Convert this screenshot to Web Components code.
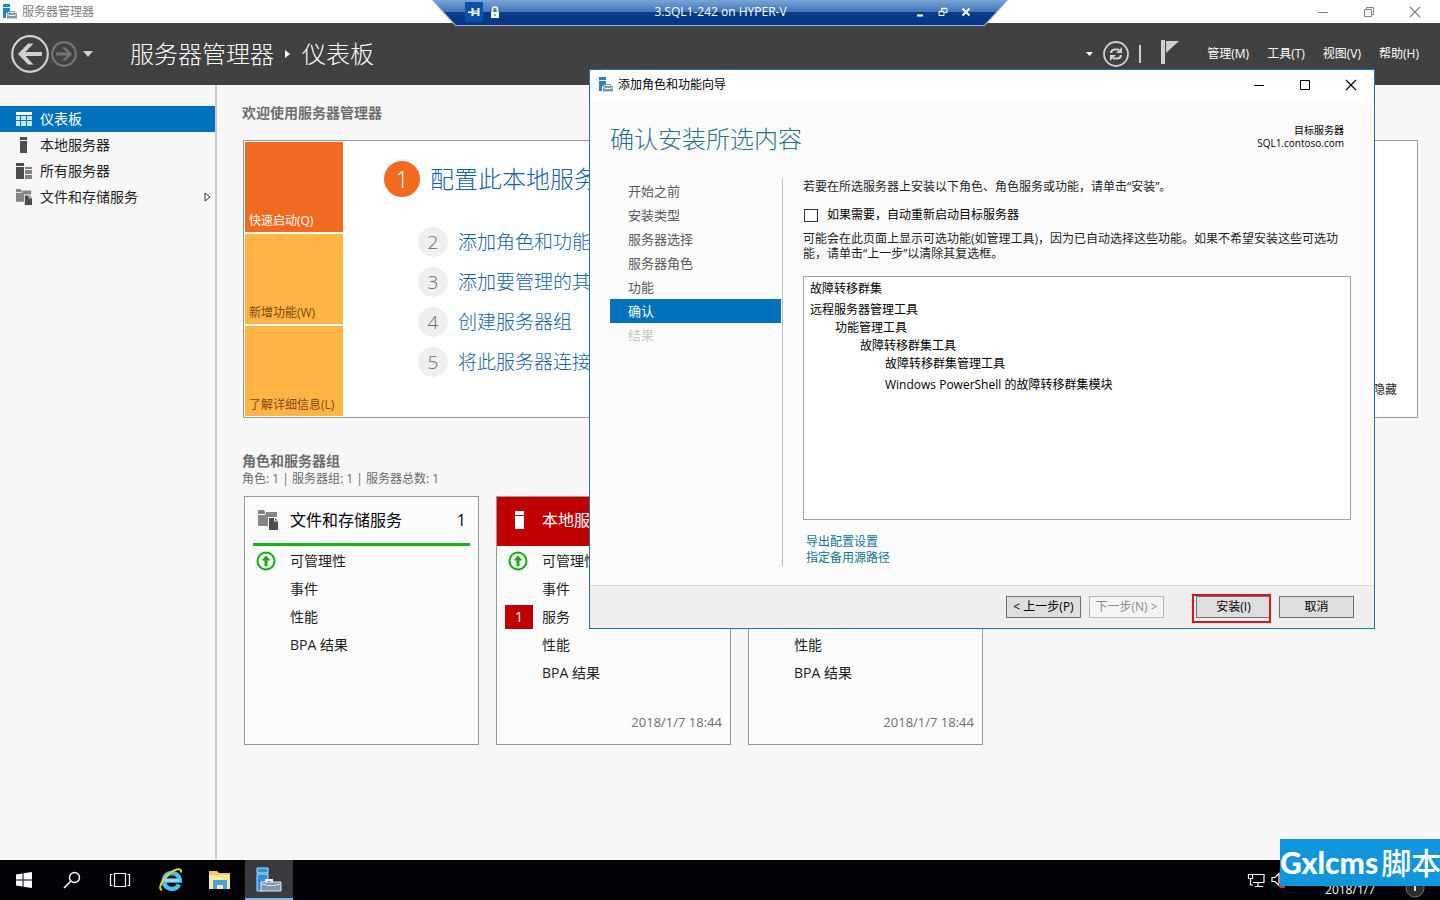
<!DOCTYPE html>
<html lang="zh-CN">
<head>
<meta charset="utf-8">
<title>服务器管理器</title>
<style>
  html, body { margin: 0; }
  body {
    font: 12px/16px "Open Sans", "Noto Sans CJK SC", sans-serif;
    color: #1e1e1e;
    background: #f7f7f7;
  }
</style>
</head>
<body>
<server-desktop></server-desktop>
<script>
const RESET = `
  *, *::before, *::after { box-sizing: border-box; }
  :host { display: block; }
  :host([hidden]) { display: none; }
  button { font: inherit; color: inherit; background: none; border: 0; margin: 0; padding: 0; cursor: default; }
  a { color: inherit; text-decoration: none; }
  ul, ol { list-style: none; margin: 0; padding: 0; }
  h1, h2, h3, p { margin: 0; font-weight: inherit; font-size: inherit; }
`;

function define(name, css, html) {
  customElements.define(name, class extends HTMLElement {
    constructor() {
      super();
      const root = this.attachShadow({ mode: 'open' });
      const tpl = document.createElement('template');
      tpl.innerHTML = `<style>${RESET}${css}</style>${typeof html === 'function' ? html(this) : html}`;
      root.append(tpl.content.cloneNode(true));
    }
  });
}

/* name: [width, height, svg body] */
const ICONS = {
  manager: [16, 16, '<path d="M1 0h7v3H1zM1 4h7v3L5 9v5H1z" fill="#1f86cc"/><path d="M4 9h12v6H4z" fill="#fff"/><path d="M5 9h10v5.500H5z" fill="#7d97ab"/><path d="M7.500 9V7.500h5V9" fill="none" stroke="#7d97ab"/><path d="M5.500 10.500l2 1h5l2-1" fill="none" stroke="#fff"/>'],
  managerBig: [26, 26, '<path d="M1 1h11v5H1zM1 7h11v7l-6 4v6H1z" fill="#2a92e0" stroke="#bfe0f8"/><path d="M10 15v-2h6v2" fill="none" stroke="#fff" stroke-width="2"/><path d="M5 15h20v9H5z" fill="#8296ab" stroke="#e3ebf3"/><path d="M6 17.500h3l2 1h8l2-1h3" fill="none" stroke="#dbe5ee"/>'],
  minimize: [12, 12, '<path d="M1 6.500h10" stroke="currentColor"/>'],
  maximize: [12, 12, '<path d="M1.500 1.500h9v9h-9z" fill="none" stroke="currentColor"/>'],
  restore: [12, 12, '<path d="M1.500 3.500h7v7h-7zM3.500 3V1.500h7v7H9" fill="none" stroke="currentColor"/>'],
  close: [12, 12, '<path d="M1 1l10 10M11 1L1 11" stroke="currentColor" stroke-width="1.100"/>'],
  rdpPin: [14, 12, '<path d="M1 5.500h4v1.500H1zM4.500 2h2v8h-2zM6 4.500h5v3.500H6zM10.500 2h2v8h-2z" fill="#fff"/><path d="M6.500 5.500h4v1h-4z" fill="#1a4c9c"/>'],
  rdpLock: [10, 13, '<path d="M2.500 6V3.500a2.500 2.500 0 015 0V6" fill="none" stroke="#fff" stroke-width="1.600"/><path d="M1 6h8v6H1z" fill="#fff"/><path d="M4.500 8h1v2h-1z" fill="#12408c"/>'],
  rdpMin: [10, 10, '<path d="M2 8.500h6" stroke="#fff" stroke-width="2"/>'],
  rdpRestore: [10, 10, '<path d="M1 4.500h5v4H1zM3.500 4V1.500H9v4H6.500" fill="none" stroke="#fff"/><path d="M1 4.500h5M3.500 1.500H9" stroke="#fff" stroke-width="1.600"/>'],
  rdpClose: [10, 10, '<path d="M1.500 1.500l7 7M8.500 1.500l-7 7" stroke="#fff" stroke-width="2"/>'],
  back: [38, 38, '<circle cx="19" cy="19" r="17.800" fill="none" stroke="#cfcfcf" stroke-width="2.200"/><path d="M7 19L17 8.500h5.500L14.500 17H31v4H14.500l8 8.500H17z" fill="#cfcfcf"/>'],
  forward: [26, 26, '<circle cx="13" cy="13" r="11.800" fill="none" stroke="#757575" stroke-width="2.200"/><path d="M21 13l-6.500 6.500H11l5-5H5v-3h11l-5-5h3.500z" fill="#757575"/>'],
  caret: [10, 6, '<path d="M0 0h10L5 6z" fill="#cfcfcf"/>'],
  caretSmall: [7, 4, '<path d="M0 0h7L3.500 4z" fill="#fff"/>'],
  crumb: [6, 8, '<path d="M0 0l5 4-5 4z" fill="#fff"/>'],
  refresh: [26, 26, '<circle cx="13" cy="13" r="12" fill="none" stroke="#cfcfcf" stroke-width="1.800"/><path d="M8 12C8.200 9.500 9.500 8.500 12 8.500h4M18 14c-.2 2.500-1.500 3.500-4 3.500h-4" fill="none" stroke="#cfcfcf" stroke-width="2.200"/><path d="M19 6v6h-6zM7 20v-6h6z" fill="#cfcfcf"/>'],
  flag: [18, 26, '<path d="M0 1h4v24H0z" fill="#cfcfcf"/><path d="M5 2h13L5 14z" fill="#cfcfcf"/>'],
  dashboard: [16, 16, '<path d="M0 1h16v3H0z" fill="#fff"/><path d="M0 5h4v4H0zM0 10h4v5H0zM5 5h5v4H5zM5 10h5v5H5zM11 5h5v4h-5zM11 10h5v5h-5z" fill="#cfe5f5"/>'],
  server: [16, 16, '<path d="M4 0h7v3H4zM4 4h7v12H4z" fill="#4d4d4d"/>'],
  servers: [16, 16, '<path d="M0 0h8v3H0zM0 4h8v12H0z" fill="#4d4d4d"/><path d="M9 4h7v2H9zM9 7h7v4H9zM9 12h7v4H9z" fill="#808080"/>'],
  files: [20, 20, '<path d="M0 1q0-1 1-1h5l1 2v2H0zM0 5h7l1-3h11v5h-9v9H1q-1 0-1-1z" fill="#858585"/><path d="M11 8h6l3 3v9h-9z" fill="#4d4d4d"/><path d="M16.500 8v3H20" fill="none" stroke="#fff"/>'],
  serverWhite: [20, 20, '<path d="M5 1h9v4H5zM5 6h9v13H5z" fill="#fff"/>'],
  ok: [20, 20, '<circle cx="10" cy="10" r="8.500" fill="none" stroke="#10b010" stroke-width="2"/><path d="M10 4.500l4.500 5h-3V15h-3V9.500h-3z" fill="#10b010"/>'],
  expand: [7, 10, '<path d="M1 1l5 4-5 4z" fill="#fff" stroke="#333"/>'],
  start: [18, 18, '<path d="M1 3.500l6.500-1v6H1zM8.500 2.300L17 1v7.500H8.500zM1 9.500h6.500v6L1 14.500zM8.500 9.500H17V17l-8.500-1.200z" fill="#fff"/>'],
  search: [18, 18, '<circle cx="11.500" cy="6.500" r="5" fill="none" stroke="#fff" stroke-width="1.400"/><path d="M8 10l-7 7" stroke="#fff" stroke-width="1.600"/>'],
  taskview: [22, 18, '<path d="M5.500 2.500h11v13h-11zM3.500 3.500h-2v11h2M18.500 3.500h2v11h-2" fill="none" stroke="#fff" stroke-width="1.200"/>'],
  ie: [26, 26, '<path d="M21 17.500a8 8 0 11.800-4H6.500" fill="none" stroke="#48c1f0" stroke-width="4.500"/><path d="M21 15H7v-3h15z" fill="#8bdcfa"/><path d="M4 23C-1 22 5 11 12 6s12-5 11-.5" fill="none" stroke="#f3cb35" stroke-width="2"/>'],
  explorer: [24, 22, '<path d="M1 2h8l2 2h11v16H1z" fill="#f3ca61"/><path d="M1 6h21v14H1z" fill="#ffe79b"/><path d="M5 20v-9h14v9h-4v-4H9v4z" fill="#3fa6df"/>'],
  network: [18, 16, '<path d="M5 2.500h12v8H6M11 11v3M8 14.500h8M1.500 2.500h4v4h-4zM3.500 7v6H6" fill="none" stroke="#fff" stroke-width="1.200"/><path d="M2 3h3v3H2z" fill="#000"/>'],
  volume: [14, 16, '<path d="M1 5.500h3l4-4v12l-4-4H1z" fill="none" stroke="#fff" stroke-width="1.200"/><circle cx="12" cy="13" r="4" fill="#d4303c"/>'],
  notice: [20, 20, '<circle cx="10" cy="10" r="9" fill="#2b2b2b" stroke="#777"/><path d="M9 5h2v8H9zM8 6h1v1H8z" fill="#ddd"/>'],
};
define('ui-icon', `:host { display: inline-flex; flex: none; } svg { display: block; }`, el => {
  const [w, h, body] = ICONS[el.getAttribute('name')];
  const s = Number(el.getAttribute('size')) || w;
  return `<svg width="${s}" height="${Math.round(h * s / w)}" viewBox="0 0 ${w} ${h}" aria-hidden="true">${body}</svg>`;
});

/* Caption row of a window: icon, title and the three window buttons. */
define('window-caption', `
  :host { background: #fff; }
  header { display: flex; align-items: center; height: 100%; }
  .title { display: flex; align-items: center; gap: 4px; flex: 1; }
  .controls { display: flex; height: 100%; }
  button { width: 46px; display: grid; place-items: center; }
`, el => `
  <header>
    <div class="title"><ui-icon name="manager"></ui-icon><slot></slot></div>
    <div class="controls">
      <button aria-label="最小化"><ui-icon name="minimize"></ui-icon></button>
      <button aria-label="最大化"><ui-icon name="${el.hasAttribute('maximized') ? 'restore' : 'maximize'}"></ui-icon></button>
      <button aria-label="关闭"><ui-icon name="close"></ui-icon></button>
    </div>
  </header>`);

define('connection-bar', `
  :host { position: absolute; top: 0; left: 0; right: 0; margin: 0 auto; width: 40%; height: 26px; z-index: 2; }
  .bar { height: 100%; display: grid; grid-template-columns: 1fr auto 1fr; align-items: center; color: #fff;
    padding: 0 32px 2px 33px; background: #8fa9cd;
    clip-path: polygon(0 0, 100% 0, calc(100% - 23px) 100%, 23px 100%); position: relative; }
  .bar::before { content: ""; position: absolute; inset: 0 1px 1px 1px;
    background: linear-gradient(#7aa5d6, #3f74b8 12px, #0a3c8a 12px, #053684);
    clip-path: polygon(0 0, 100% 0, calc(100% - 23px) 100%, 23px 100%); }
  .bar > * { position: relative; }
  .left, .right { display: flex; align-items: center; }
  .left { gap: 3px; }
  .right { justify-content: flex-end; gap: 3px; }
  button { width: 18px; height: 20px; display: grid; place-items: center; }
  .right button { width: 20px; }
  .pin { background: #0a50ac; }
`, `
  <div class="bar">
    <div class="left">
      <button class="pin" aria-label="固定"><ui-icon name="rdpPin"></ui-icon></button>
      <button aria-label="连接安全"><ui-icon name="rdpLock"></ui-icon></button>
    </div>
    <span>3.SQL1-242 on HYPER-V</span>
    <div class="right">
      <button aria-label="最小化"><ui-icon name="rdpMin"></ui-icon></button>
      <button aria-label="还原"><ui-icon name="rdpRestore"></ui-icon></button>
      <button aria-label="关闭"><ui-icon name="rdpClose"></ui-icon></button>
    </div>
  </div>`);

define('manager-header', `
  :host { background: #414141; color: #fff; height: 62px; }
  header { display: flex; align-items: center; height: 100%; padding: 0 21px 0 11px; }
  .history { display: flex; align-items: center; gap: 2px; width: 119px; }
  .history button { display: flex; }
  .history .recent { margin-left: 4px; }
  h1 { display: flex; align-items: center; gap: 11px; font-size: 24px; line-height: 32px; font-weight: 300; flex: 1; }
  .status { display: flex; align-items: center; gap: 10px; }
  .status button { display: flex; }
  .rule { width: 2px; height: 18px; background: #cfcfcf; }
  .flag { margin: 0 16px 4px 10px; }
  nav { display: flex; gap: 18px; margin-left: 12px; }
`, `
  <header>
    <div class="history">
      <button aria-label="后退"><ui-icon name="back"></ui-icon></button>
      <button aria-label="前进"><ui-icon name="forward"></ui-icon></button>
      <button class="recent" aria-label="最近"><ui-icon name="caret"></ui-icon></button>
    </div>
    <h1><span>服务器管理器</span><ui-icon name="crumb"></ui-icon><span>仪表板</span></h1>
    <div class="status">
      <button aria-label="刷新选项"><ui-icon name="caretSmall"></ui-icon></button>
      <button aria-label="刷新"><ui-icon name="refresh"></ui-icon></button>
      <span class="rule"></span>
      <button class="flag" aria-label="通知"><ui-icon name="flag"></ui-icon></button>
    </div>
    <nav><button>管理(M)</button><button>工具(T)</button><button>视图(V)</button><button>帮助(H)</button></nav>
  </header>`);

define('side-item', `
  a { display: flex; align-items: center; gap: 8px; height: 26px; padding: 0 4px 0 16px; font-size: 14px; line-height: 20px; }
  span { flex: 1; }
  :host([current]) a { background: #0072bc; color: #fff; }
`, el => `
  <a href="#"${el.hasAttribute('current') ? ' aria-current="page"' : ''}>
    <ui-icon name="${el.getAttribute('icon')}" size="16"></ui-icon><span><slot></slot></span>
    ${el.hasAttribute('expandable') ? '<ui-icon name="expand"></ui-icon>' : ''}
  </a>`);

define('side-nav', `
  :host { width: 217px; flex: none; border-right: 2px solid #cdcdcd; padding-top: 21px; }
`, `
  <nav>
    <side-item icon="dashboard" current>仪表板</side-item>
    <side-item icon="server">本地服务器</side-item>
    <side-item icon="servers">所有服务器</side-item>
    <side-item icon="files" expandable>文件和存储服务</side-item>
  </nav>`);

define('welcome-panel', `
  .panel { display: flex; border: 1px solid #999; padding: 1px; background: #fff; }
  .tiles { display: flex; flex-direction: column; gap: 2px; width: 98px; flex: none; }
  .tiles button { display: flex; align-items: flex-end; height: 90px; padding: 0 4px 3px; background: #ffb444; color: #7b4a12; white-space: nowrap; }
  .tiles .on { background: #f26a1f; color: #fff; }
  ol { flex: 1; padding: 19px 0 0 41px; color: #0f62ad; font-weight: 300; }
  li { display: flex; align-items: center; gap: 10px; margin: 0 0 10px 34px; font-size: 19px; line-height: 30px; }
  li.first { margin: 0 0 30px; font-size: 24px; line-height: 36px; }
  .num { flex: none; width: 30px; height: 30px; border-radius: 50%; text-align: center; background: #efefef; color: #6a6a6a; }
  .first .num { width: 36px; height: 36px; background: #f26a1f; color: #fff; }
  .hide { align-self: flex-end; margin: 0 19px 18px 0; }
`, `
  <div class="panel">
    <div class="tiles">
      <button class="on">快速启动(Q)</button><button>新增功能(W)</button><button>了解详细信息(L)</button>
    </div>
    <ol>
      <li class="first"><span class="num">1</span><a href="#">配置此本地服务器</a></li>
      <li><span class="num">2</span><a href="#">添加角色和功能</a></li>
      <li><span class="num">3</span><a href="#">添加要管理的其他服务器</a></li>
      <li><span class="num">4</span><a href="#">创建服务器组</a></li>
      <li><span class="num">5</span><a href="#">将此服务器连接到云服务</a></li>
    </ol>
    <a class="hide" href="#">隐藏</a>
  </div>`);

define('role-row', `
  :host { display: grid; grid-template-columns: 28px 1fr; column-gap: 9px; align-items: center; height: 28px; padding-left: 8px; font-size: 14px; line-height: 20px; }
  .mark { display: grid; place-items: center; height: 24px; }
  .mark ui-icon { margin-right: 2px; }
  .count { background: #c00000; color: #fff; }
`, el => {
  const count = el.getAttribute('count');
  const mark = el.hasAttribute('ok') ? '<ui-icon name="ok"></ui-icon>' : '';
  return `<span class="mark${count ? ' count' : ''}">${count || mark}</span><span><slot></slot></span>`;
});

define('role-card', `
  :host { width: 235px; height: 249px; border: 1px solid #999; background: #fcfcfc; display: flex; flex-direction: column; }
  h3 { display: flex; align-items: center; gap: 12px; height: 49px; margin: 0 8px; padding: 0 4px 0 5px; border-bottom: 3px solid #14b414; color: #000; font-size: 16px; line-height: 22px; }
  h3 .name { flex: 1; }
  :host([alert]) h3 { margin: 0; padding: 0 12px 0 13px; border-color: #c00000; background: #c00000; color: #fff; }
  .rows { flex: 1; padding-top: 1px; }
  footer { text-align: right; padding: 0 8px 13px; color: #6e6e6e; line-height: 18px; font-size: 13px; }
  footer:empty { display: none; }
`, el => `
  <h3><ui-icon name="${el.getAttribute('icon')}"></ui-icon><span class="name">${el.getAttribute('heading')}</span><span>1</span></h3>
  <div class="rows"><slot></slot></div>
  <footer>${el.getAttribute('time') || ''}</footer>`);

define('dashboard-view', `
  :host { flex: 1; min-width: 0; padding: 18px 22px 40px 26px; }
  h2 { font-size: 14px; line-height: 20px; font-weight: 700; color: #6e6e6e; margin-left: -1px; }
  welcome-panel { margin: 17px 0 33px; }
  .sub { color: #6a6a6a; margin: 0 0 9px -1px; }
  .cards { display: flex; gap: 17px; margin-left: 1px; }
`, `
  <h2>欢迎使用服务器管理器</h2>
  <welcome-panel></welcome-panel>
  <h2>角色和服务器组</h2>
  <p class="sub">角色: 1 | 服务器组: 1 | 服务器总数: 1</p>
  <div class="cards">
    <role-card icon="files" heading="文件和存储服务">
      <role-row ok>可管理性</role-row><role-row>事件</role-row><role-row>性能</role-row><role-row>BPA 结果</role-row>
    </role-card>
    <role-card icon="serverWhite" heading="本地服务器" time="2018/1/7 18:44" alert>
      <role-row ok>可管理性</role-row><role-row>事件</role-row><role-row count="1">服务</role-row><role-row>性能</role-row><role-row>BPA 结果</role-row>
    </role-card>
    <role-card icon="serverWhite" heading="所有服务器" time="2018/1/7 18:44" alert>
      <role-row ok>可管理性</role-row><role-row>事件</role-row><role-row count="1">服务</role-row><role-row>性能</role-row><role-row>BPA 结果</role-row>
    </role-card>
  </div>`);

define('wizard-steps', `
  :host { width: 173px; flex: none; border-right: 1px solid #bdbdbd; padding-right: 1px; }
  li { line-height: 24px; padding-left: 18px; font-size: 13px; color: #5a5a5a; }
  .current { background: #0072bc; color: #fff; }
  .off { color: #c6c6c6; }
`, `
  <ol>
    <li>开始之前</li><li>安装类型</li><li>服务器选择</li><li>服务器角色</li><li>功能</li>
    <li class="current" aria-current="step">确认</li><li class="off">结果</li>
  </ol>`);

define('wizard-page', `
  :host { flex: 1; min-width: 0; padding: 0 23px 0 20px; line-height: 15px; }
  label { display: flex; align-items: center; gap: 9px; margin: 13px 0 8px; line-height: 16px; color: #000; }
  input { appearance: none; width: 14px; height: 13px; margin: 0 0 0 1px; border: 1px solid #333; background: #fff; }
  .list { height: 244px; margin: 15px 0 14px; padding: 3px 6px; border: 1px solid #a0a0a0; background: #fff; color: #000; line-height: 18px; overflow: auto; }
  .list ul { padding-left: 25px; }
  .group { margin-top: 3px; }
  .links { padding-left: 3px; color: #0f7596; line-height: 16px; }
  .links a { display: table; }
`, `
  <p>若要在所选服务器上安装以下角色、角色服务或功能，请单击“安装”。</p>
  <label><input type="checkbox">如果需要，自动重新启动目标服务器</label>
  <p>可能会在此页面上显示可选功能(如管理工具)，因为已自动选择这些功能。如果不希望安装这些可选功能，请单击“上一步”以清除其复选框。</p>
  <div class="list">
    <div>故障转移群集</div>
    <div class="group">远程服务器管理工具</div>
    <ul><li>功能管理工具
      <ul><li>故障转移群集工具
        <ul><li>故障转移群集管理工具</li><li class="group">Windows PowerShell 的故障转移群集模块</li></ul>
      </li></ul>
    </li></ul>
  </div>
  <div class="links"><a href="#">导出配置设置</a><a href="#">指定备用源路径</a></div>`);

define('wizard-dialog', `
  :host { position: absolute; top: 69px; right: 65px; width: 786px; border: 1px solid #1d72b0; background: #fcfcfc; z-index: 1; }
  window-caption { height: 30px; padding: 0 0 0 8px; color: #000; }
  .head { display: flex; justify-content: space-between; align-items: flex-start; padding: 22px 30px 23px 20px; }
  h2 { font-size: 24px; line-height: 34px; font-weight: 300; color: #1f7391; }
  .target { padding-top: 2px; text-align: right; color: #000; font-size: 10px; line-height: 13px; }
  .target span { display: block; }
  .body { display: flex; padding: 0 0 19px 20px; }
  footer { display: flex; justify-content: flex-end; gap: 8px; padding: 10px 20px; border-top: 1px solid #d9d9d9; background: #efefef; color: #000; }
  footer button { width: 75px; height: 22px; border: 1px solid #707070; background: #dedede; line-height: 20px; white-space: nowrap; position: relative; }
  footer button:disabled { border-color: #b8b8b8; background: #f4f4f4; color: #8d8d8d; }
  footer .install { margin-left: 24px; }
  .install::after { content: ""; position: absolute; inset: -3px -1px -6px -5px; border: 2px solid #d8161b; }
`, `
  <section role="dialog" aria-label="添加角色和功能向导">
    <window-caption>添加角色和功能向导</window-caption>
    <div class="head"><h2>确认安装所选内容</h2><div class="target"><span>目标服务器</span><span>SQL1.contoso.com</span></div></div>
    <div class="body"><wizard-steps></wizard-steps><wizard-page></wizard-page></div>
    <footer><button>&lt; 上一步(P)</button><button disabled>下一步(N) &gt;</button><button class="install">安装(I)</button><button>取消</button></footer>
  </section>`);

define('task-bar', `
  :host { height: 40px; background: #020307; color: #fff; }
  .bar { display: flex; justify-content: space-between; height: 100%; }
  .apps { display: flex; }
  .apps button { width: 48px; display: grid; place-items: center; }
  .apps .app { margin-left: 1px; }
  .apps .active { background: #3a3b40; box-shadow: inset 0 -2px #76b5e8; }
  .apps .first { margin-left: 3px; }
  .tray { display: flex; align-items: center; gap: 6px; padding-right: 15px; }
  .clock { align-self: flex-end; margin: 0 24px 0 34px; line-height: 20px; }
  .notice { align-self: flex-end; margin-bottom: 2px; }
`, `
  <div class="bar">
    <div class="apps">
      <button aria-label="开始"><ui-icon name="start"></ui-icon></button>
      <button aria-label="搜索"><ui-icon name="search"></ui-icon></button>
      <button aria-label="任务视图"><ui-icon name="taskview"></ui-icon></button>
      <button class="app first" aria-label="Internet Explorer"><ui-icon name="ie"></ui-icon></button>
      <button class="app" aria-label="文件资源管理器"><ui-icon name="explorer"></ui-icon></button>
      <button class="app active" aria-label="服务器管理器"><ui-icon name="managerBig"></ui-icon></button>
    </div>
    <div class="tray">
      <ui-icon name="network"></ui-icon><ui-icon name="volume"></ui-icon>
      <span class="clock">2018/1/7</span><ui-icon class="notice" name="notice"></ui-icon>
    </div>
  </div>`);

define('site-badge', `
  :host { position: absolute; right: 0; bottom: 14px; z-index: 3; width: 160px; height: 47px; overflow: hidden; background: #1296db; color: #fff;
    font-size: 30px; line-height: 47px; white-space: nowrap; }
  b { font-family: Lato, sans-serif; font-weight: 900; }
  span { font-weight: 500; margin-left: 3px; }
`, `<b>Gxlcms</b><span>脚本</span>`);

define('server-desktop', `
  :host { position: relative; display: flex; flex-direction: column; min-height: 100vh; overflow: hidden; }
  .caption { height: 23px; padding: 0 2px; color: #808080; }
  .work { display: flex; flex: 1; }
`, `
  <connection-bar></connection-bar>
  <window-caption class="caption" maximized>服务器管理器</window-caption>
  <manager-header></manager-header>
  <div class="work"><side-nav></side-nav><dashboard-view></dashboard-view></div>
  <wizard-dialog></wizard-dialog>
  <task-bar></task-bar>
  <site-badge></site-badge>`);
</script>
</body>
</html>
